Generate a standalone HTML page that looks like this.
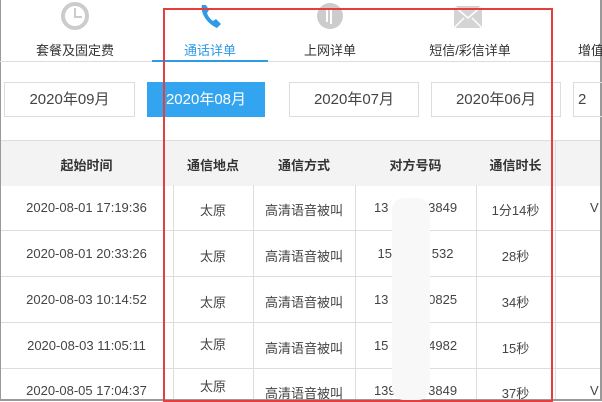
<!DOCTYPE html><html><head><meta charset="utf-8"><style>
body{margin:0;width:602px;height:401px;overflow:hidden;background:#fff;font-family:"Liberation Sans","Noto Sans CJK SC",sans-serif;position:relative}
.a{position:absolute}
.tab{position:absolute;top:40px;font-size:13px;color:#333;text-align:center}
.btn{position:absolute;top:82px;height:35px;border:1px solid #ddd;box-sizing:border-box;font-size:15px;color:#444;text-align:center;line-height:33px}
.c{position:absolute;font-size:13px;color:#444;text-align:center}
.h{position:absolute;top:155px;font-size:13px;font-weight:bold;color:#333;text-align:center}
</style></head><body>
<div class="a" style="left:0;top:0;width:1px;height:401px;background:#999"></div>
<div class="a" style="left:600px;top:0;width:2px;height:401px;background:#999"></div>
<div class="a" style="left:0;top:399px;width:602px;height:2px;background:#999"></div>
<svg class="a" style="left:60px;top:1px" width="30" height="30"><circle cx="15" cy="15" r="12" fill="none" stroke="#ccc" stroke-width="4"/><path d="M15 7v9h7" stroke="#ccc" stroke-width="2" fill="none"/></svg>
<svg class="a" style="left:198px;top:1px" width="28" height="32"><path d="M4 4c-2 7 4 18 15 23l4-4-5-5-3 2c-3-2-5-5-6-8l2-3-3-5z" fill="#2e9be6"/></svg>
<svg class="a" style="left:315px;top:2px" width="30" height="28"><circle cx="15" cy="14" r="13" fill="#ccc"/><path d="M12 6v14M16 22V8" stroke="#fff" stroke-width="2"/></svg>
<svg class="a" style="left:453px;top:5px" width="30" height="25"><rect x="1" y="1" width="28" height="22" fill="#d4d4d4"/><path d="M1 1l14 12 14-12M1 23l10-10M29 23l-10-10" stroke="#fff" stroke-width="1.5" fill="none"/></svg>
<div class="tab" style="left:30px;width:90px">套餐及固定费</div>
<div class="tab" style="left:152px;width:116px;color:#2e9be6">通话详单</div>
<div class="tab" style="left:290px;width:80px">上网详单</div>
<div class="tab" style="left:410px;width:120px">短信/彩信详单</div>
<div class="tab" style="left:578px;width:40px;text-align:left">增值</div>
<div class="a" style="left:0;top:61px;width:600px;height:1px;background:#ddd"></div>
<div class="a" style="left:152px;top:60px;width:116px;height:2px;background:#2e9be6"></div>
<div class="btn" style="left:4px;width:131px">2020年09月</div>
<div class="btn" style="left:147px;width:118px;background:#33a4f0;border-color:#33a4f0;color:#fff">2020年08月</div>
<div class="btn" style="left:289px;width:130px">2020年07月</div>
<div class="btn" style="left:431px;width:130px">2020年06月</div>
<div class="btn" style="left:573px;width:40px;text-align:left;padding-left:4px">2</div>
<div class="a" style="left:1px;top:140px;width:599px;height:45px;background:#f3f3f3;border-top:1px solid #ddd"></div>
<div class="h" style="left:0;width:173px">起始时间</div>
<div class="h" style="left:173px;width:80px">通信地点</div>
<div class="h" style="left:253px;width:102px">通信方式</div>
<div class="h" style="left:355px;width:121px">对方号码</div>
<div class="h" style="left:476px;width:79px">通信时长</div>
<div class="a" style="left:555px;top:140px;width:1px;height:45px;background:#ddd"></div>
<div class="a" style="left:173px;top:185px;width:1px;height:214px;background:#ddd"></div>
<div class="a" style="left:253px;top:185px;width:1px;height:214px;background:#ddd"></div>
<div class="a" style="left:355px;top:185px;width:1px;height:214px;background:#ddd"></div>
<div class="a" style="left:476px;top:185px;width:1px;height:214px;background:#ddd"></div>
<div class="a" style="left:555px;top:185px;width:1px;height:214px;background:#ddd"></div>
<div class="a" style="left:1px;top:230px;width:599px;height:1px;background:#ddd"></div>
<div class="a" style="left:1px;top:276px;width:599px;height:1px;background:#ddd"></div>
<div class="a" style="left:1px;top:322px;width:599px;height:1px;background:#ddd"></div>
<div class="a" style="left:1px;top:368px;width:599px;height:1px;background:#ddd"></div>
<div class="c" style="left:0;top:200px;width:173px">2020-08-01 17:19:36</div>
<div class="c" style="left:0;top:246px;width:173px">2020-08-01 20:33:26</div>
<div class="c" style="left:0;top:292px;width:173px">2020-08-03 10:14:52</div>
<div class="c" style="left:0;top:338px;width:173px">2020-08-03 11:05:11</div>
<div class="c" style="left:0;top:383px;width:173px">2020-08-05 17:04:37</div>
<div class="c" style="left:173px;top:200px;width:80px">太原</div>
<div class="c" style="left:173px;top:246px;width:80px">太原</div>
<div class="c" style="left:173px;top:292px;width:80px">太原</div>
<div class="c" style="left:173px;top:334px;width:80px">太原</div>
<div class="c" style="left:173px;top:376px;width:80px">太原</div>
<div class="c" style="left:253px;top:200px;width:102px">高清语音被叫</div>
<div class="c" style="left:253px;top:246px;width:102px">高清语音被叫</div>
<div class="c" style="left:253px;top:292px;width:102px">高清语音被叫</div>
<div class="c" style="left:253px;top:338px;width:102px">高清语音被叫</div>
<div class="c" style="left:253px;top:383px;width:102px">高清语音被叫</div>
<div class="c" style="left:355px;top:200px;width:121px">13&nbsp;&nbsp;&nbsp;&nbsp;&nbsp;&nbsp;&nbsp;&nbsp;&nbsp;93849</div>
<div class="c" style="left:355px;top:246px;width:121px">159&nbsp;&nbsp;&nbsp;&nbsp;&nbsp;&nbsp;&nbsp;&nbsp;&nbsp;532</div>
<div class="c" style="left:355px;top:292px;width:121px">13&nbsp;&nbsp;&nbsp;&nbsp;&nbsp;&nbsp;&nbsp;&nbsp;&nbsp;90825</div>
<div class="c" style="left:355px;top:338px;width:121px">15&nbsp;&nbsp;&nbsp;&nbsp;&nbsp;&nbsp;&nbsp;&nbsp;&nbsp;94982</div>
<div class="c" style="left:355px;top:383px;width:121px">139&nbsp;&nbsp;&nbsp;&nbsp;&nbsp;&nbsp;&nbsp;&nbsp;&nbsp;3849</div>
<div class="a" style="left:392px;top:198px;width:38px;height:202px;background:#f8f8f8;border-radius:12px"></div>
<div class="c" style="left:476px;top:200px;width:79px">1分14秒</div>
<div class="c" style="left:476px;top:246px;width:79px">28秒</div>
<div class="c" style="left:476px;top:292px;width:79px">34秒</div>
<div class="c" style="left:476px;top:338px;width:79px">15秒</div>
<div class="c" style="left:476px;top:383px;width:79px">37秒</div>
<div class="c" style="left:590px;top:200px">V</div>
<div class="c" style="left:590px;top:383px">V</div>
<div class="a" style="left:163px;top:8px;width:386px;height:390px;border:2px solid #e53e3e"></div>
</body></html>
